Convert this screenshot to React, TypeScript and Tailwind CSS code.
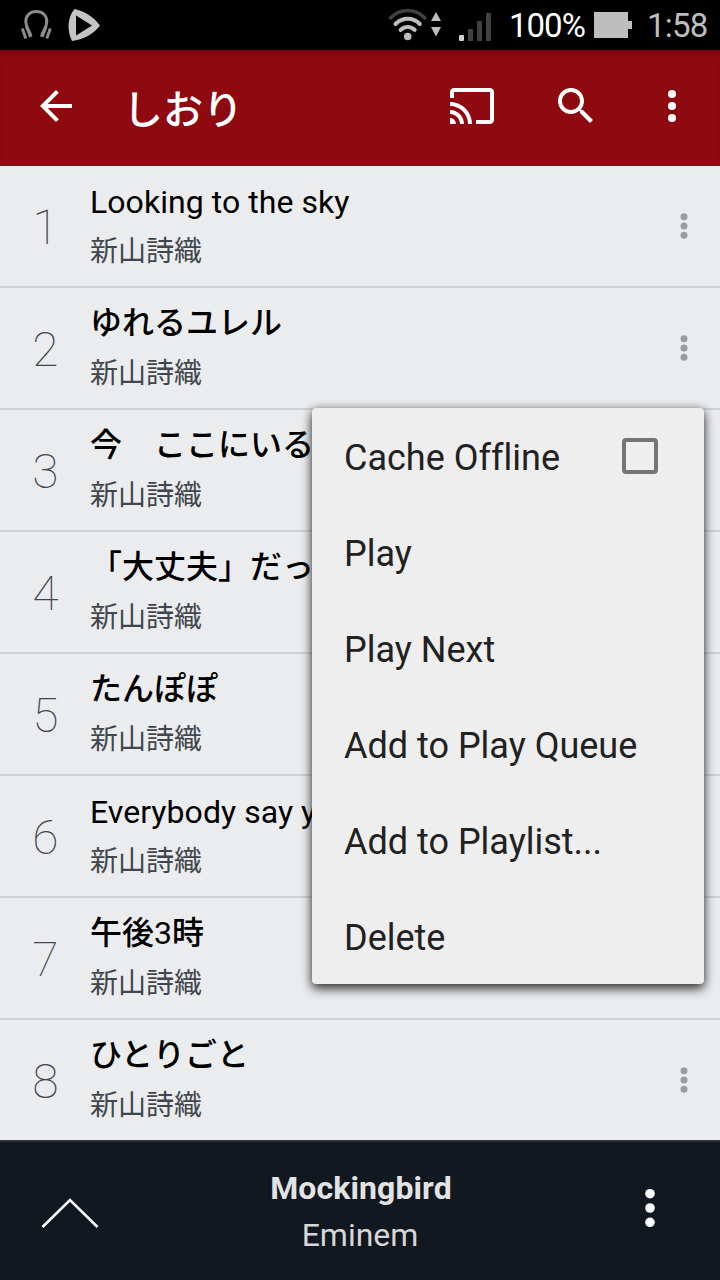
import type { ReactNode } from "react";

interface Track {
  id: number;
  title: string;
  artist: string;
}

const ARTIST = "新山詩織";

const tracks: Track[] = [
  { id: 1, title: "Looking to the sky", artist: ARTIST },
  { id: 2, title: "ゆれるユレル", artist: ARTIST },
  { id: 3, title: "今　ここにいる", artist: ARTIST },
  { id: 4, title: "「大丈夫」だって", artist: ARTIST },
  { id: 5, title: "たんぽぽ", artist: ARTIST },
  { id: 6, title: "Everybody say yeah", artist: ARTIST },
  { id: 7, title: "午後3時", artist: ARTIST },
  { id: 8, title: "ひとりごと", artist: ARTIST },
];

const menuItems = ["Cache Offline", "Play", "Play Next", "Add to Play Queue", "Add to Playlist...", "Delete"];

const isJapanese = (text: string) => /[\u3000-\u9fff]/.test(text);

interface DotsProps {
  className?: string;
  r: number;
  gap: number;
}

function Dots({ className, r, gap }: DotsProps) {
  return (
    <svg viewBox="-8 -24 16 48" width="16" height="48" fill="currentColor" className={className}>
      <circle cy={-gap} r={r} />
      <circle r={r} />
      <circle cy={gap} r={r} />
    </svg>
  );
}

function StatusBar() {
  return (
    <div className="flex h-[50px] items-center justify-between bg-black">
      <svg viewBox="0 0 110 50" width="110" height="50">
        <g fill="none" stroke="#8c8c8c" strokeWidth="3">
          <path d="M31 36.500C30 31 25.800 28.500 25.800 21.500C25.800 15.500 30 11.500 36.300 11.500S46.800 15.500 46.800 21.500C46.800 28.500 42.500 31 41.500 36.500" />
          <path d="M22.300 28.500L25.800 38.500M26.500 26.500L30.500 37M50.300 28.500L46.800 38.500M46.100 26.500L42.100 37" />
        </g>
        <path d="M74.500 9C84 11 94 17 100 25.500C94 34 83 39.500 72 41C67 31 67 18 74.500 9Z M76 15.500V35.500L92 25.500Z" fill="#c4c4c4" fillRule="evenodd" />
      </svg>
      <div className="flex w-[340px] items-center whitespace-nowrap">
        <svg viewBox="0 0 120 50" width="120" height="50" className="shrink-0">
          <g fill="none" strokeLinecap="round">
            <path d="M10.500 18C20 8 35.500 8 44.800 18" stroke="#414141" strokeWidth="3.500" />
            <path d="M15.500 24C22.500 17 33 17 39.800 24" stroke="#bebebe" strokeWidth="4" />
            <path d="M20.500 30C25 26 30.500 26 34.800 30" stroke="#bebebe" strokeWidth="3.800" />
          </g>
          <circle cx="27.700" cy="36.500" r="3.800" fill="#bebebe" />
          <path d="M51 21L56 12L61 21ZM51 27L56 36.500L61 27Z" fill="#bebebe" />
          <rect x="79" y="35" width="5" height="6" rx="1" fill="#cfcfcf" />
          <path d="M88 29h5v12h-5zM97 21h5v20h-5zM106 13h5v28h-5z" fill="#414141" />
        </svg>
        <span className="ml-[9px] w-[77px] pt-px text-[33px] leading-[50px] tracking-[-1px] text-white">100%</span>
        <svg viewBox="0 0 38 26" width="38" height="26" className="ml-[8px] shrink-0">
          <path d="M0 0h34v9h4v8h-4v9H0z" fill="#bebebe" />
        </svg>
        <span className="ml-[15px] pt-px text-[33px] leading-[50px] tracking-[-0.8px] text-[#bebebe]">1:58</span>
      </div>
    </div>
  );
}

function IconButton({ label, className, children }: { label: string; className: string; children: ReactNode }) {
  return (
    <button aria-label={label} className={`flex h-full items-center justify-center ${className}`}>
      {children}
    </button>
  );
}

function AppBar() {
  return (
    <header className="flex h-[116px] items-center bg-[#8e0a10] pb-[4px] text-white shadow-[inset_0_5px_5px_-3px_rgba(50,0,0,0.4)]">
      <IconButton label="Back" className="w-[112px]">
        <svg viewBox="0 0 24 24" width="48" height="48" fill="currentColor">
          <path d="M20 11H7.830l5.590-5.590L12 4l-8 8 8 8 1.410-1.410L7.830 13H20v-2z" />
        </svg>
      </IconButton>
      <h1 className="ml-[11px] grow pt-[10px] text-[40px] leading-[48px] font-medium">しおり</h1>
      <IconButton label="Cast" className="w-[104px]">
        <svg viewBox="0 0 24 24" width="48" height="48" fill="currentColor">
          <path d="M21 3H3c-1.100 0-2 .9-2 2v3h2V5h18v14h-7v2h7c1.100 0 2-.9 2-2V5c0-1.100-.9-2-2-2zM1 18v3h3c0-1.660-1.340-3-3-3zm0-4v2c2.760 0 5 2.240 5 5h2c0-3.870-3.130-7-7-7zm0-4v2c4.970 0 9 4.030 9 9h2c0-6.080-4.930-11-11-11z" />
        </svg>
      </IconButton>
      <IconButton label="Search" className="w-[104px]">
        <svg viewBox="0 0 24 24" width="48" height="48" fill="currentColor">
          <path d="M15.500 14h-.79l-.28-.27C15.410 12.590 16 11.110 16 9.500 16 5.910 13.090 3 9.500 3S3 5.910 3 9.500 5.910 16 9.500 16c1.610 0 3.090-.59 4.230-1.570l.27.28v.79l5 4.990L20.490 19l-4.990-5zm-6 0C7.010 14 5 11.990 5 9.500S7.010 5 9.500 5 14 7.010 14 9.500 11.990 14 9.500 14z" />
        </svg>
      </IconButton>
      <IconButton label="More options" className="w-[92px] pr-[4px]">
        <Dots r={4} gap={12} />
      </IconButton>
    </header>
  );
}

function TrackTitle({ title }: { title: string }) {
  if (!isJapanese(title)) {
    return <div className="text-[32px] leading-[48px] tracking-[0.05px] whitespace-nowrap text-black">{title}</div>;
  }
  return (
    <div className="-mt-px pb-px text-[32px] leading-[48px] font-medium whitespace-nowrap text-black">
      {title.split(/(\d+)/).map((part, i) => (
        <span key={i} className={/^\d+$/.test(part) ? 'font-normal' : ''}>{part}</span>
      ))}
    </div>
  );
}

function TrackRow({ track }: { track: Track }) {
  return (
    <li className="flex h-[122px] border-b-2 border-[#d0d2d4]">
      <div className="w-[90px] pt-[34px] pl-px text-center text-[48px] leading-[56px] font-thin text-[#41464d]">{track.id}</div>
      <div className="min-w-0 grow pt-[12px]">
        <TrackTitle title={track.title} />
        <div className="mt-[6px] text-[28px] leading-[40px] text-[#41464d]">{track.artist}</div>
      </div>
      <button aria-label="Track options" className="flex h-[120px] w-[72px] items-center justify-center">
        <Dots r={3.5} gap={9.3} className="text-[#9b9c9e]" />
      </button>
    </li>
  );
}

function ContextMenu() {
  return (
    <div className="absolute top-[408px] left-[312px] h-[576px] w-[392px] rounded-[4px] bg-[#eeeeee] shadow-[0_5px_11px_rgba(0,0,0,0.7),0_0_8px_rgba(0,0,0,0.3)]">
      {menuItems.map((item, i) => (
        <div key={item} className="flex h-[96px] items-center justify-between pr-[46px] pl-[32px] text-[36px] leading-[48px] text-[#212121]">
          <span className="pt-[3px] whitespace-nowrap [font-variant-ligatures:none]">{item}</span>
          {i === 0 && <span className="h-[36px] w-[36px] rounded-[4px] border-4 border-[#757575]" />}
        </div>
      ))}
    </div>
  );
}

function PlayerBar() {
  return (
    <footer className="flex h-[140px] border-t-2 border-[#2b323b] bg-[#111820] text-[#e2e3e4]">
      <button aria-label="Expand player" className="flex w-[140px] items-center justify-center pt-[3px]">
        <svg viewBox="0 0 60 32" width="60" height="32" fill="none" stroke="#fff" strokeWidth="2.600">
          <path d="M2.500 30L30 3L57.500 30" />
        </svg>
      </button>
      <div className="grow pt-[25px] pl-[2px] text-center text-[32px]">
        <div className="leading-[42px] font-bold tracking-[0.1px]">Mockingbird</div>
        <div className="mt-[5px] pr-[2px] leading-[42px] text-[#d6d7d8]">Eminem</div>
      </div>
      <button aria-label="Player options" className="flex w-[140px] items-center justify-center pb-[6px] text-white">
        <Dots r={4.8} gap={14.3} />
      </button>
    </footer>
  );
}

export default function App() {
  return (
    <div className="relative flex h-[1280px] w-[720px] flex-col overflow-hidden bg-[#ebecee] font-['Roboto','Noto_Sans_CJK_JP',sans-serif]">
      <StatusBar />
      <AppBar />
      <ul className="h-[974px] overflow-hidden">
        {tracks.map(track => (
          <TrackRow key={track.id} track={track} />
        ))}
      </ul>
      <PlayerBar />
      <ContextMenu />
    </div>
  );
}
